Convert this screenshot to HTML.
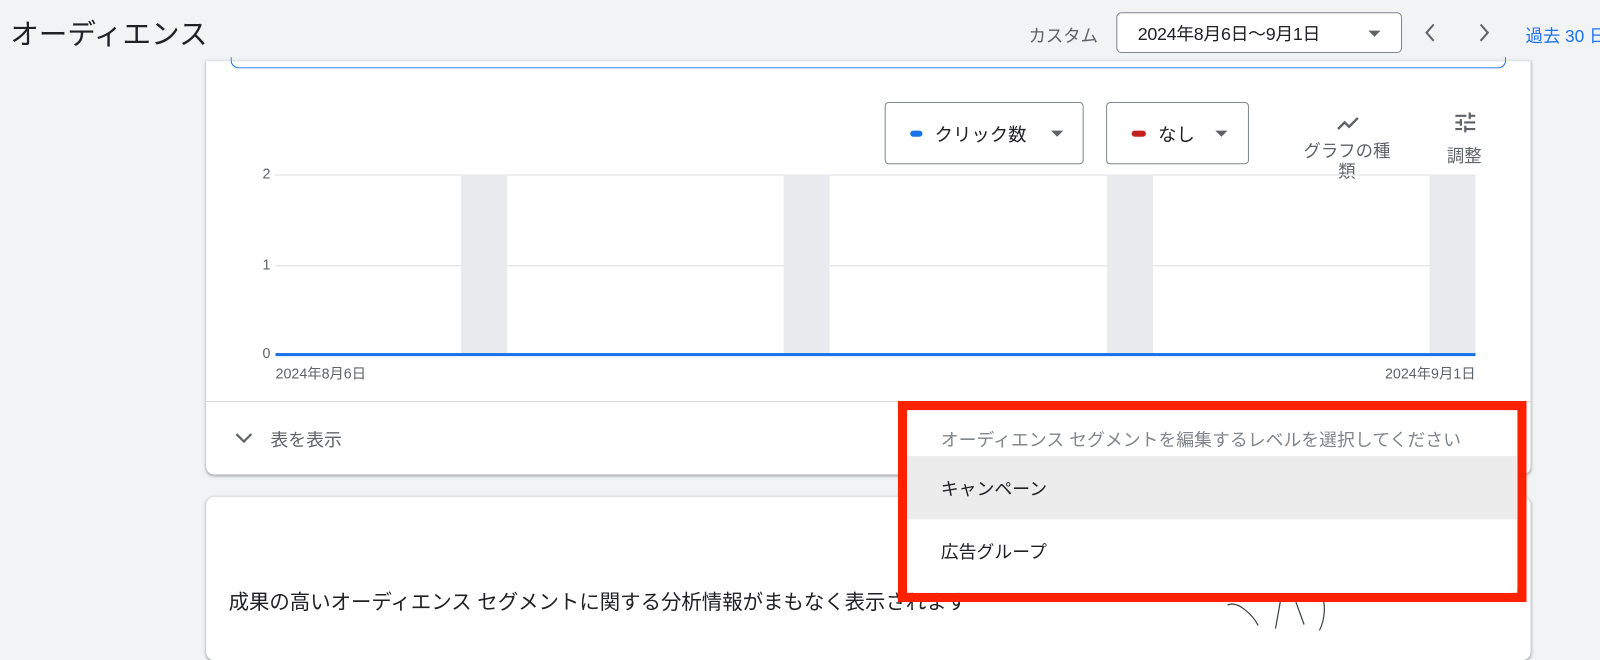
<!DOCTYPE html>
<html><head><meta charset="utf-8"><style>
*{box-sizing:border-box;margin:0;padding:0}
body{width:1600px;height:620px;overflow:hidden;background:#f1f3f4;font-family:"Liberation Sans","Noto Sans CJK JP",sans-serif;color:#202124;position:relative}
#w{position:absolute;left:0;top:0;width:1568px;height:608px;transform:scale(1.0204);transform-origin:0 0}
.a{position:absolute}
.card{position:absolute;background:#fff;border-radius:8px;box-shadow:0 1px 2px rgba(60,64,67,.3),0 1px 3px 1px rgba(60,64,67,.15)}
.btn{position:absolute;border:1px solid #80868b;border-radius:4px;background:#fff;font-size:18px;display:flex;align-items:center}
.tri{width:0;height:0;border-left:6px solid transparent;border-right:6px solid transparent;border-top:6px solid #5f6368;position:absolute}
.grid{position:absolute;left:270px;width:1176px;height:1px;background:#dadce0}
.bar{position:absolute;top:171px;height:176px;width:45px;background:#e8eaed}
.yl{position:absolute;font-size:14px;color:#5f6368;width:20px;text-align:right;left:245px}
</style></head><body><div id="w">
<div class="a" style="left:10px;top:12px;font-size:28px;color:#202124">オーディエンス</div>
<div class="a" style="left:1008px;top:21px;font-size:17px;color:#5f6368">カスタム</div>
<div class="btn" style="left:1094px;top:12px;width:280px;height:40px;padding-left:20px;border-radius:5px;font-size:17.5px;letter-spacing:-0.3px">2024年8月6日〜9月1日<div class="tri" style="left:246px;top:17px"></div></div>
<svg class="a" style="left:1390px;top:20px" width="24" height="24" viewBox="0 0 24 24"><path d="M15 4L8 12l7 8" fill="none" stroke="#5f6368" stroke-width="2"/></svg>
<svg class="a" style="left:1442px;top:20px" width="24" height="24" viewBox="0 0 24 24"><path d="M9 4l7 8-7 8" fill="none" stroke="#5f6368" stroke-width="2"/></svg>
<div class="a" style="left:1495px;top:21px;font-size:17px;color:#1a73e8;white-space:nowrap">過去 30 日</div>

<div class="card" style="left:202px;top:60px;width:1298px;height:405px;border-radius:0 0 8px 8px"></div>
<div class="a" style="left:226px;top:56px;width:1250px;height:11px;border:1px solid #1a73e8;border-top:none;border-radius:0 0 8px 8px"></div>

<div class="btn" style="left:867px;top:100px;width:195px;height:61px;padding-left:24px"><span style="display:inline-block;width:12px;height:6px;border-radius:3px;background:#1a73e8;margin-right:12px"></span>クリック数<div class="tri" style="left:162px;top:27px"></div></div>
<div class="btn" style="left:1084px;top:100px;width:140px;height:61px;padding-left:24px"><span style="display:inline-block;width:14px;height:6px;border-radius:3px;background:#c5221f;margin-right:12px"></span>なし<div class="tri" style="left:106px;top:27px"></div></div>
<svg class="a" style="left:1308px;top:108px" width="26" height="26" viewBox="0 0 24 24"><path d="M3 17l6-6 4 4 8-8" fill="none" stroke="#5f6368" stroke-width="2.2"/></svg>
<div class="a" style="left:1262px;top:139px;width:116px;text-align:center;font-size:17px;line-height:20px;color:#5f6368">グラフの種<br>類</div>
<svg class="a" style="left:1423px;top:107px" width="26" height="26" viewBox="0 0 24 24" fill="#5f6368"><path d="M3 17v2h6v-2H3zM3 5v2h10V5H3zm10 16v-2h8v-2h-8v-2h-2v6h2zM7 9v2H3v2h4v2h2V9H7zm14 4v-2H11v2h10zm-6-4h2V7h4V5h-4V3h-2v6z"/></svg>
<div class="a" style="left:1418px;top:139px;font-size:17px;color:#5f6368">調整</div>

<div class="grid" style="top:171px"></div>
<div class="grid" style="top:260px"></div>
<div class="bar" style="left:452px"></div><div class="bar" style="left:768px"></div><div class="bar" style="left:1085px"></div><div class="bar" style="left:1401px"></div>
<div class="a" style="left:270px;top:346px;width:1176px;height:3px;background:#1a73e8"></div>
<div class="yl" style="top:162px">2</div><div class="yl" style="top:251px">1</div><div class="yl" style="top:338px">0</div>
<div class="a" style="left:270px;top:356px;font-size:14px;color:#5f6368">2024年8月6日</div>
<div class="a" style="left:1326px;top:356px;font-size:14px;color:#5f6368;width:120px;text-align:right">2024年9月1日</div>
<div class="a" style="left:202px;top:393px;width:1298px;height:1px;background:#dadce0"></div>
<svg class="a" style="left:228px;top:418px" width="22" height="22" viewBox="0 0 24 24"><path d="M4 8l8 8 8-8" fill="none" stroke="#5f6368" stroke-width="2.4"/></svg>
<div class="a" style="left:265px;top:418px;font-size:17.5px;color:#5f6368">表を表示</div>

<div class="card" style="left:202px;top:487px;width:1298px;height:160px"></div>
<div class="a" style="left:224px;top:574px;font-size:20px;white-space:nowrap">成果の高いオーディエンス セグメントに関する分析情報がまもなく表示されます</div>
<svg class="a" style="left:1195px;top:578px" width="150" height="40"><path d="M8 15c10-5 25 10 30 20M60 10l-5 28M75 12l8 22M100 5c5 10 3 25-2 35" fill="none" stroke="#3c4043" stroke-width="1.2"/></svg>

<div class="a" style="left:880px;top:393px;width:616px;height:197px;border:9px solid #ff2200"></div>
<div class="a" style="left:889px;top:402px;width:598px;height:179px;background:#fff;border-radius:0 0 6px 6px">
<div class="a" style="left:33px;top:16px;font-size:17.5px;color:#80868b;white-space:nowrap">オーディエンス セグメントを編集するレベルを選択してください</div>
<div class="a" style="left:0;top:45px;width:598px;height:62px;background:#ececec"></div>
<div class="a" style="left:33px;top:64px;font-size:17.5px">キャンペーン</div>
<div class="a" style="left:33px;top:126px;font-size:17.5px">広告グループ</div>
</div>
</div></body></html>
